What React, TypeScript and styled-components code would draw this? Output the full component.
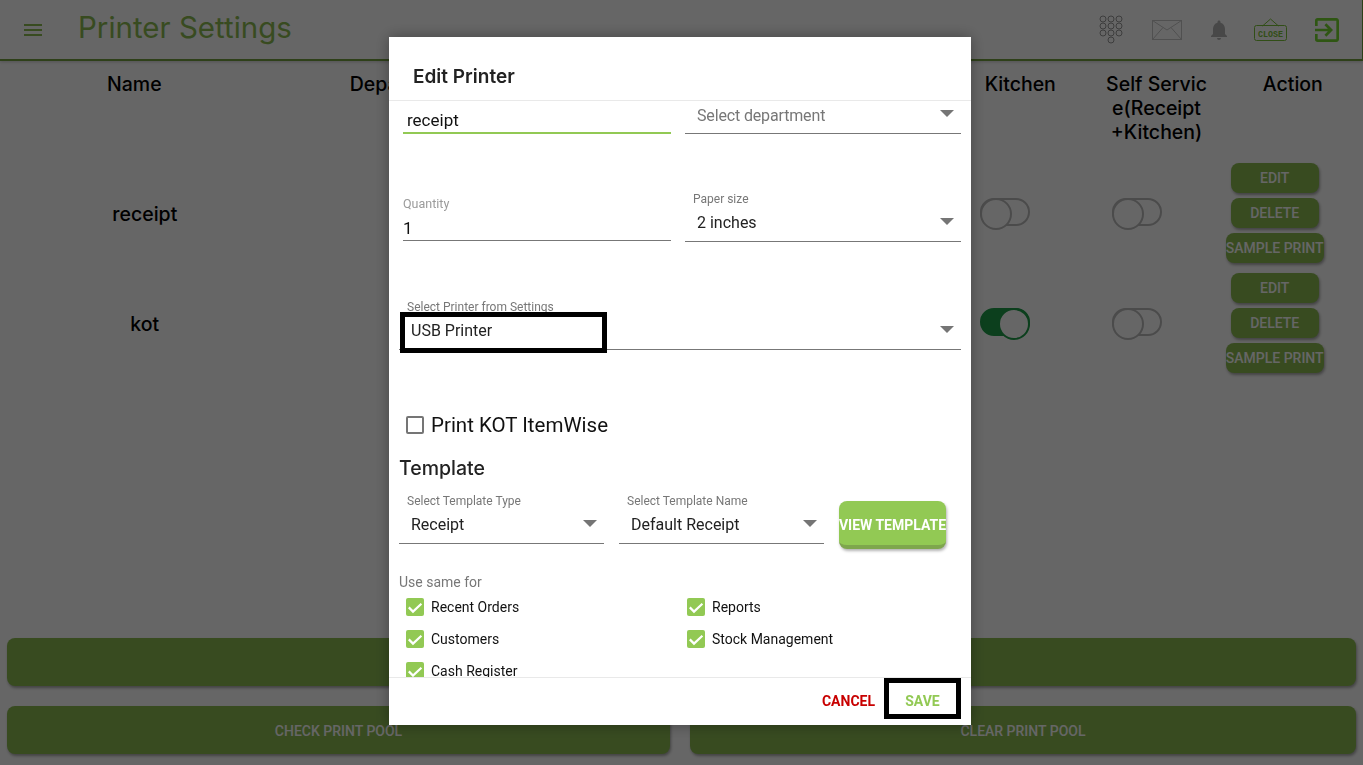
import React from 'react';
import styled, { createGlobalStyle } from 'styled-components';
import { MdMenu, MdNotifications, MdExitToApp } from 'react-icons/md';

const GREEN = '#92c954';
const PAGE_GREEN = '#8cbc52';

const GlobalStyle = createGlobalStyle`
  * { box-sizing: border-box; }
  html, body { margin: 0; padding: 0; height: 100%; overflow: hidden; background: #fff; }
  body { font-family: Roboto, "Liberation Sans", sans-serif; color: #000; }
`;

const printers = [
  { name: 'receipt', kitchen: false, self: false },
  { name: 'kot', kitchen: true, self: false },
];

const App: React.FC = () => {
  return (
    <Page>
      <GlobalStyle />
      <Header>
        <MenuButton><MdMenu size={24} /></MenuButton>
        <Title>Printer Settings</Title>
        <HeaderIcons>
          <KeypadIcon />
          <MailIcon />
          <BellButton><MdNotifications size={24} /></BellButton>
          <CloseSignIcon />
          <ExitButton><MdExitToApp size={32} /></ExitButton>
        </HeaderIcons>
      </Header>

      <HeadRow>
        <HeadCell>Name</HeadCell>
        <DepartmentCell>Department</DepartmentCell>
        <HeadCell $col={8}>Kitchen</HeadCell>
        <HeadCell $col={9}>Self Servic<br />e(Receipt<br />+Kitchen)</HeadCell>
        <HeadCell $col={10}>Action</HeadCell>
      </HeadRow>

      {printers.map(p => (
        <BodyRow key={p.name}>
          <NameCell>{p.name}</NameCell>
          <ToggleCell $col={8} $pad={26}><Toggle $on={p.kitchen} /></ToggleCell>
          <ToggleCell $col={9} $pad={22}><Toggle $on={p.self} /></ToggleCell>
          <ActionCell>
            <SmallButton>EDIT</SmallButton>
            <SmallButton>DELETE</SmallButton>
            <SmallButton $wide>SAMPLE PRINT</SmallButton>
          </ActionCell>
        </BodyRow>
      ))}

      <BottomBar>
        <BigButton $full>ADD PRINTER</BigButton>
        <BigButton>CHECK PRINT POOL</BigButton>
        <BigButton>CLEAR PRINT POOL</BigButton>
      </BottomBar>

      <Backdrop />

      <Modal>
        <ModalTitle>Edit Printer</ModalTitle>
        <ModalBody>
          <FieldRow $first>
            <TextField $focused>
              <TextValue $focused>receipt</TextValue>
            </TextField>
            <SelectField>
              <SelectValue $placeholder>Select department</SelectValue>
              <Arrow />
            </SelectField>
          </FieldRow>

          <FieldRow>
            <TextField>
              <QuantityLabel>Quantity</QuantityLabel>
              <TextValue>1</TextValue>
            </TextField>
            <SelectField>
              <FloatLabel>Paper size</FloatLabel>
              <SelectValue>2 inches</SelectValue>
              <Arrow />
            </SelectField>
          </FieldRow>

          <PrinterRow>
            <SelectField>
              <FloatLabel>Select Printer from Settings</FloatLabel>
              <SelectValue $focused>USB Printer</SelectValue>
              <Arrow />
            </SelectField>
          </PrinterRow>

          <KotLine>
            <EmptyBox />
            <span>Print KOT ItemWise</span>
          </KotLine>

          <SectionTitle>Template</SectionTitle>

          <TemplateRow>
            <SelectField>
              <FloatLabel>Select Template Type</FloatLabel>
              <SelectValue>Receipt</SelectValue>
              <Arrow />
            </SelectField>
            <SelectField>
              <FloatLabel>Select Template Name</FloatLabel>
              <SelectValue>Default Receipt</SelectValue>
              <Arrow />
            </SelectField>
            <ViewButton>VIEW TEMPLATE</ViewButton>
          </TemplateRow>

          <UseSameLabel>Use same for</UseSameLabel>
          <CheckGrid>
            {['Recent Orders', 'Reports', 'Customers', 'Stock Management', 'Cash Register'].map(label => (
              <CheckItem key={label}>
                <CheckedBox>
                  <svg width="18" height="18" viewBox="0 0 18 18" fill="none" stroke="#fff" strokeWidth="2.2">
                    <path d="M2.8 9.4 L7 13.6 L15.4 5.8" />
                  </svg>
                </CheckedBox>
                {label}
              </CheckItem>
            ))}
          </CheckGrid>
        </ModalBody>
        <ModalFooter>
          <CancelButton>CANCEL</CancelButton>
          <SaveButton>SAVE</SaveButton>
        </ModalFooter>
      </Modal>
    </Page>
  );
};

export default App;

const KeypadIcon = () => (
  <svg width="26" height="30" viewBox="0 0 26 30" fill="none" stroke="#9a9a9a" strokeWidth="1">
    {[4, 11, 18].map(y =>
      [5, 13, 21].map(x => <circle key={`${x}-${y}`} cx={x} cy={y} r="3" />)
    )}
    <circle cx="13" cy="25" r="3" />
  </svg>
);

const MailIcon = () => (
  <svg width="32" height="20" viewBox="0 0 32 20" fill="none" stroke="#c8c8c8" strokeWidth="1">
    <rect x="0.5" y="0.5" width="29" height="19" />
    <path d="M0.5 0.5 L15 10 L29.5 0.5 M0.5 19.5 L11 7.5 M29.5 19.5 L19 7.5" />
  </svg>
);

const CloseSignIcon = () => (
  <svg width="34" height="24" viewBox="0 0 34 24" fill="none" stroke="#7cc43a">
    <path d="M8.5 8 L16.5 1 L24.5 8" />
    <rect x="0.5" y="7.5" width="32" height="15" rx="2" />
    <text x="4" y="19" fontFamily="'Liberation Mono', monospace" fontSize="9" fontWeight="700"
      textLength="25" lengthAdjust="spacingAndGlyphs" fill="#7cc43a" stroke="none">CLOSE</text>
  </svg>
);

const Page = styled.div`
  height: 100vh;
  display: flex;
  flex-direction: column;
  background: #fff;
`;

const Header = styled.header`
  height: 61px;
  flex: none;
  display: flex;
  align-items: center;
  padding: 0 19px 0 21px;
  border-bottom: 2px solid #74a040;
  border-right: 1px solid #74a040;
  box-shadow: 0 1px 3px rgba(0, 0, 0, 0.2);
`;

const MenuButton = styled.div`
  display: flex;
  color: ${PAGE_GREEN};
`;

const Title = styled.h1`
  margin: 0 0 5px 33px;
  font-family: Inter, sans-serif;
  font-size: 29.5px;
  font-weight: 400;
  color: ${PAGE_GREEN};
`;

const HeaderIcons = styled.div`
  margin-left: auto;
  display: flex;
  align-items: center;
  gap: 23px;

  & > svg:first-child {
    margin-right: 5px;
  }
`;

const BellButton = styled.div`
  display: flex;
  color: #b4b4b4;
`;

const ExitButton = styled.div`
  display: flex;
  color: #75d830;
`;

const tableColumns = 'repeat(10, 1fr)';

const HeadRow = styled.div`
  display: grid;
  grid-template-columns: ${tableColumns};
  height: 97px;
  flex: none;
  padding: 11px 0 0;
`;

const HeadCell = styled.div<{ $col?: number }>`
  grid-column: ${p => (p.$col ? `${p.$col} / span 1` : 'span 2')};
  font-family: Inter, sans-serif;
  font-size: 19.5px;
  font-weight: 500;
  line-height: 24px;
  text-align: center;
  padding: 0 5px 0 1px;
`;

const DepartmentCell = styled(HeadCell)`
  padding-right: 9px;
`;

const BodyRow = styled.div`
  display: grid;
  grid-template-columns: ${tableColumns};
  height: 110px;
  flex: none;
  align-items: center;
`;

const NameCell = styled.div`
  grid-column: span 2;
  font-family: Inter, sans-serif;
  font-size: 19.5px;
  font-weight: 500;
  text-align: center;
  margin-left: 17px;
  padding-top: 2px;
`;

const ToggleCell = styled.div<{ $col: number; $pad: number }>`
  grid-column: ${p => p.$col} / span 1;
  display: flex;
  padding-left: ${p => p.$pad}px;
`;

const Toggle = styled.div<{ $on: boolean }>`
  position: relative;
  width: 50px;
  height: 28px;
  margin-top: -2px;
  border-radius: 14px;
  border: 2px solid ${p => (p.$on ? '#1f9e4a' : '#bcbcbc')};
  background: ${p => (p.$on ? '#1f9e4a' : '#fff')};

  &::after {
    content: '';
    position: absolute;
    top: -2px;
    ${p => (p.$on ? 'right: -2px;' : 'left: -2px;')}
    width: 28px;
    height: 28px;
    border-radius: 50%;
    background: #fff;
    border: 2px solid ${p => (p.$on ? '#1f9e4a' : '#bcbcbc')};
  }
`;

const ActionCell = styled.div`
  grid-column: 10 / span 1;
  width: 98px;
  margin-left: -1px;
  display: flex;
  flex-direction: column;
  align-items: center;
  gap: 5px;
`;

const SmallButton = styled.button<{ $wide?: boolean }>`
  width: ${p => (p.$wide ? '98px' : '88px')};
  height: 30px;
  padding: 0;
  border: 0;
  border-radius: 8px;
  background: ${PAGE_GREEN};
  color: #fff;
  font-family: Roboto, sans-serif;
  font-size: 14px;
  font-weight: 500;
  white-space: nowrap;
  box-shadow: 1px 2px 3px rgba(0, 0, 0, 0.35);
  display: flex;
  align-items: center;
  justify-content: center;
`;

const BottomBar = styled.div`
  margin-top: auto;
  display: grid;
  grid-template-columns: 663px 666px;
  justify-content: space-between;
  row-gap: 20px;
  padding: 0 7px 11px;
`;

const BigButton = styled.button<{ $full?: boolean }>`
  grid-column: ${p => (p.$full ? '1 / -1' : 'auto')};
  height: 48px;
  padding: 2px 0 0;
  border: 0;
  border-radius: 8px;
  background: ${PAGE_GREEN};
  color: #fff;
  font-family: Roboto, sans-serif;
  font-size: 14px;
  font-weight: 500;
  box-shadow: 1px 2px 3px rgba(0, 0, 0, 0.35);
`;

const Backdrop = styled.div`
  position: fixed;
  inset: 0;
  background: rgba(0, 0, 0, 0.6);
`;

const Modal = styled.div`
  position: fixed;
  left: 389px;
  top: 37px;
  width: 582px;
  height: 688px;
  display: flex;
  flex-direction: column;
  background: #fff;
  box-shadow: 0 0 14px rgba(0, 0, 0, 0.35);
`;

const ModalTitle = styled.div`
  height: 64px;
  flex: none;
  padding: 28px 0 0 24px;
  font-family: Inter, sans-serif;
  font-size: 19px;
  font-weight: 600;
  line-height: 24px;
  color: #222;
  border-bottom: 1px solid #e9e9e9;
`;

const ModalBody = styled.div`
  flex: 1;
  min-height: 0;
  overflow: hidden;
  padding: 0 10px;
`;

const FieldRow = styled.div<{ $first?: boolean }>`
  display: grid;
  grid-template-columns: 268px 276px;
  column-gap: 14px;
  align-items: end;
  padding-left: 4px;
  height: ${p => (p.$first ? '33px' : '108px')};
`;

const PrinterRow = styled.div`
  height: 108px;
  display: flex;
  flex-direction: column;
  justify-content: flex-end;
`;

const TextField = styled.div<{ $focused?: boolean }>`
  border-bottom: ${p => (p.$focused ? `2px solid ${GREEN}` : '1px solid #777')};
  margin-bottom: ${p => (p.$focused ? '0' : '1px')};
`;

const TextValue = styled.div<{ $focused?: boolean }>`
  font-size: 17px;
  line-height: 22px;
  height: 25px;
  padding-top: 2px;
  padding-left: ${p => (p.$focused ? '4px' : '0')};
  color: #111;
`;

const QuantityLabel = styled.div`
  font-size: 12.5px;
  line-height: 14px;
  color: #9b9b9b;
  margin-bottom: 4px;
`;

const SelectField = styled.div`
  position: relative;
  border-bottom: 1px solid #777;
`;

const FloatLabel = styled.div`
  padding-left: 8px;
  font-size: 12px;
  line-height: 14px;
  color: #777;
`;

const SelectValue = styled.div<{ $placeholder?: boolean; $focused?: boolean }>`
  font-size: 16px;
  line-height: 28px;
  height: 31px;
  margin: 3px 0 1px;
  color: ${p => (p.$placeholder ? '#777' : '#222')};
  padding-left: ${p => (p.$focused ? '6px' : '12px')};
  ${p => p.$placeholder && 'margin-top: 0; padding-top: 1px; letter-spacing: -0.15px;'}
  ${p => p.$focused && 'margin-left: 6px; width: 197px; outline: 5px solid #000;'}
`;

const Arrow = styled.span`
  position: absolute;
  right: 7px;
  bottom: 16px;
  width: 0;
  height: 0;
  border-left: 7px solid transparent;
  border-right: 7px solid transparent;
  border-top: 7px solid #757575;
`;

const KotLine = styled.label`
  display: flex;
  align-items: center;
  gap: 7px;
  margin: 63px 0 0 7px;
  height: 24px;
  font-size: 20.5px;
  color: #111;
`;

const EmptyBox = styled.span`
  width: 18px;
  height: 18px;
  border: 2px solid #757575;
  border-radius: 2px;
`;

const SectionTitle = styled.div`
  margin-top: 19px;
  font-family: Inter, sans-serif;
  font-size: 19.5px;
  font-weight: 500;
  line-height: 24px;
  color: #222;
`;

const TemplateRow = styled.div`
  display: grid;
  grid-template-columns: 205px 205px 107px;
  column-gap: 15px;
  align-items: start;
  margin-top: 14px;
`;

const ViewButton = styled.button`
  height: 48px;
  margin-top: 7px;
  padding: 3px 0 0;
  border: 0;
  border-bottom: 4px solid #7ea64d;
  border-radius: 8px;
  background: ${GREEN};
  color: #fff;
  font-family: Roboto, sans-serif;
  font-size: 14px;
  font-weight: 700;
  white-space: nowrap;
  box-shadow: 1px 2px 3px rgba(0, 0, 0, 0.3);
  display: flex;
  align-items: center;
  justify-content: center;
`;

const UseSameLabel = styled.div`
  margin-top: 25px;
  font-size: 14px;
  line-height: 16px;
  color: #777;
`;

const CheckGrid = styled.div`
  display: grid;
  grid-template-columns: 281px 1fr;
  grid-auto-rows: 32px;
  padding-left: 7px;
  margin-top: 1px;
`;

const CheckItem = styled.div`
  display: flex;
  align-items: center;
  gap: 7px;
  font-size: 14px;
  color: #111;
`;

const CheckedBox = styled.span`
  width: 18px;
  height: 18px;
  flex: none;
  border-radius: 2px;
  background: ${GREEN};
  display: flex;
`;

const ModalFooter = styled.div`
  height: 48px;
  flex: none;
  display: flex;
  justify-content: flex-end;
  align-items: flex-start;
  gap: 9px;
  padding-right: 10px;
  border-top: 1px solid #e9e9e9;
`;

const CancelButton = styled.button`
  height: 41px;
  padding: 4px 0 0;
  border: 0;
  background: none;
  color: #c80000;
  font-family: Roboto, sans-serif;
  font-size: 14px;
  font-weight: 700;
`;

const SaveButton = styled.button`
  width: 77px;
  height: 41px;
  padding: 5px 0 0;
  border: 5px solid #000;
  background: #fff;
  color: ${GREEN};
  font-family: Roboto, sans-serif;
  font-size: 14px;
  font-weight: 700;
`;
